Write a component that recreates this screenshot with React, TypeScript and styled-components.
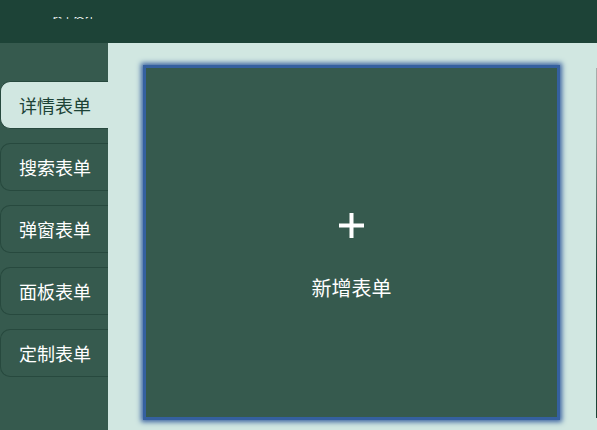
import styled, { createGlobalStyle } from 'styled-components';

const GlobalStyle = createGlobalStyle`
  html, body {
    margin: 0;
    padding: 0;
    height: 100%;
    overflow: hidden;
  }
  body {
    font-family: "Noto Sans CJK SC", "Noto Sans", sans-serif;
  }
  #root {
    height: 100%;
  }
`;

const Layout = styled.div`
  display: flex;
  flex-direction: column;
  width: 597px;
  height: 430px;
  overflow: hidden;
`;

const Header = styled.header`
  flex: 0 0 43px;
  background-color: #1d4337;
  display: flex;
  padding-left: 51px;
`;

// title sits mostly above the visible strip, only its foot shows
const TitleClip = styled.div`
  margin-top: 17px;
  height: 2px;
  overflow: hidden;
`;

const Title = styled.div`
  color: #ffffff;
  font-size: 11px;
  line-height: 12px;
  margin-top: -10px;
  white-space: nowrap;
`;

const Body = styled.div`
  flex: 1;
  display: flex;
  min-height: 0;
`;

const Sidebar = styled.nav`
  flex: 0 0 108px;
  background-color: #365a4e;
  display: flex;
  flex-direction: column;
  gap: 14px;
  padding-top: 38px;
`;

const Tab = styled.div<{ $active?: boolean }>`
  height: 48px;
  box-sizing: border-box;
  display: flex;
  align-items: center;
  padding-left: 18px;
  border: 1px solid #27493e;
  border-right: none;
  border-radius: 10px 0 0 10px;
  background-color: ${(p) => (p.$active ? '#d1e7e1' : '#365a4e')};
  color: ${(p) => (p.$active ? '#1d4337' : '#ffffff')};
  font-size: 18px;
  cursor: pointer;
`;

const Main = styled.main`
  flex: 1;
  background-color: #d1e7e1;
  display: flex;
  gap: 39px;
  padding: 25px 0 0 38px;
  overflow: hidden;
`;

const AddCard = styled.div`
  flex: 0 0 411px;
  height: 349px;
  background-color: #365a4e;
  box-shadow: 0 0 0 3px #35609f, 0 0 5px 5px #3b62a0;
  display: flex;
  flex-direction: column;
  align-items: center;
  justify-content: center;
  gap: 36px;
  padding-top: 30px;
  box-sizing: border-box;
  cursor: pointer;
`;

const AddLabel = styled.div`
  color: #ffffff;
  font-size: 20px;
  line-height: 28px;
`;

const FormCard = styled.div`
  flex: 0 0 411px;
  height: 350px;
  background: linear-gradient(180deg, #a8aeac 0%, #8d9a96 20%, #1d4337 60%, #1d4337 100%);
`;

const tabs = ['详情表单', '搜索表单', '弹窗表单', '面板表单', '定制表单'];

const App = () => {
  return (
    <Layout>
      <GlobalStyle />
      <Header>
        <TitleClip>
          <Title>表单设计</Title>
        </TitleClip>
      </Header>
      <Body>
        <Sidebar>
          {tabs.map((t, i) => (
            <Tab key={t} $active={i === 0}>
              {t}
            </Tab>
          ))}
        </Sidebar>
        <Main>
          <AddCard>
            <svg width="25" height="25" viewBox="0 0 25 25">
              <path d="M12.5 0v25M0 12.5h25" stroke="#ffffff" strokeWidth="4" />
            </svg>
            <AddLabel>新增表单</AddLabel>
          </AddCard>
          <FormCard />
        </Main>
      </Body>
    </Layout>
  );
};

export default App;
